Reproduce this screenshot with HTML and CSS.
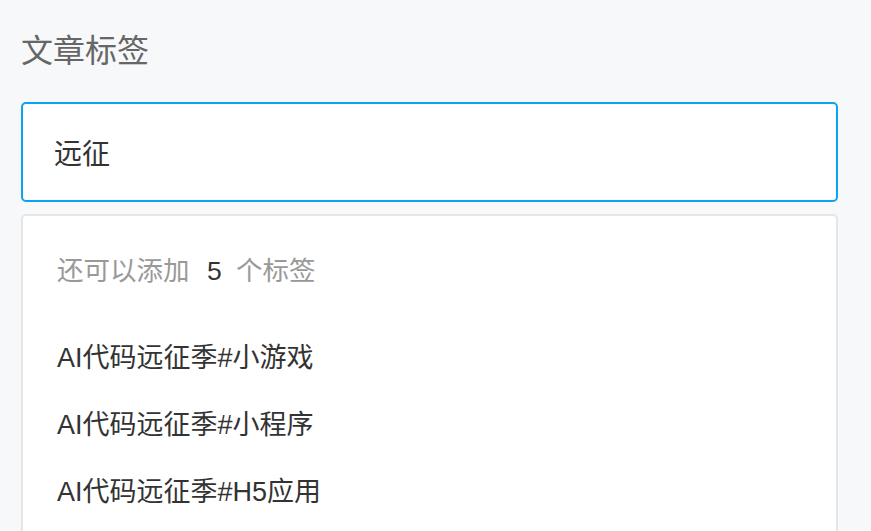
FILE: index.html
```html
<!DOCTYPE html>
<html lang="zh-CN">
<head>
<meta charset="utf-8">
<title>文章标签</title>
<link rel="stylesheet" href="styles.css">
</head>
<body>
<div class="page">
  <div class="title">文章标签</div>
  <div class="input">远征</div>
  <div class="dropdown">
    <div class="hint">还可以添加 <span class="count">5</span> 个标签</div>
    <ul class="list">
      <li class="item">AI代码远征季#小游戏</li>
      <li class="item">AI代码远征季#小程序</li>
      <li class="item">AI代码远征季#H5应用</li>
    </ul>
  </div>
</div>
</body>
</html>
```

FILE: styles.css
```css
html, body {
  margin: 0;
  padding: 0;
  background: #f7f8fa;
}
body {
  font-family: "Liberation Sans", "Noto Sans CJK SC", sans-serif;
  overflow: hidden;
}
.page {
  padding: 27px 33px 0 21px;
}
.title {
  font-size: 32px;
  line-height: 48px;
  color: #666;
}
.input {
  margin-top: 27px;
  box-sizing: border-box;
  height: 100px;
  border: 2px solid #0aa3f2;
  border-radius: 5px;
  background: #fff;
  padding: 0 31px;
  display: flex;
  align-items: center;
  font-size: 28px;
  color: #333;
}
.dropdown {
  margin-top: 12px;
  border: 2px solid #e6e6e6;
  border-radius: 5px;
  background: #fff;
  padding: 22px 34px 20px;
}
.hint {
  font-size: 26.5px;
  line-height: 67px;
  color: #999;
  white-space: pre;
}
.count {
  color: #333;
  margin: 0 7px 0 10px;
}
.list {
  list-style: none;
  margin: 20px 0 0;
  padding: 0;
}
.item {
  font-size: 27px;
  line-height: 67px;
  color: #333;
}
```
